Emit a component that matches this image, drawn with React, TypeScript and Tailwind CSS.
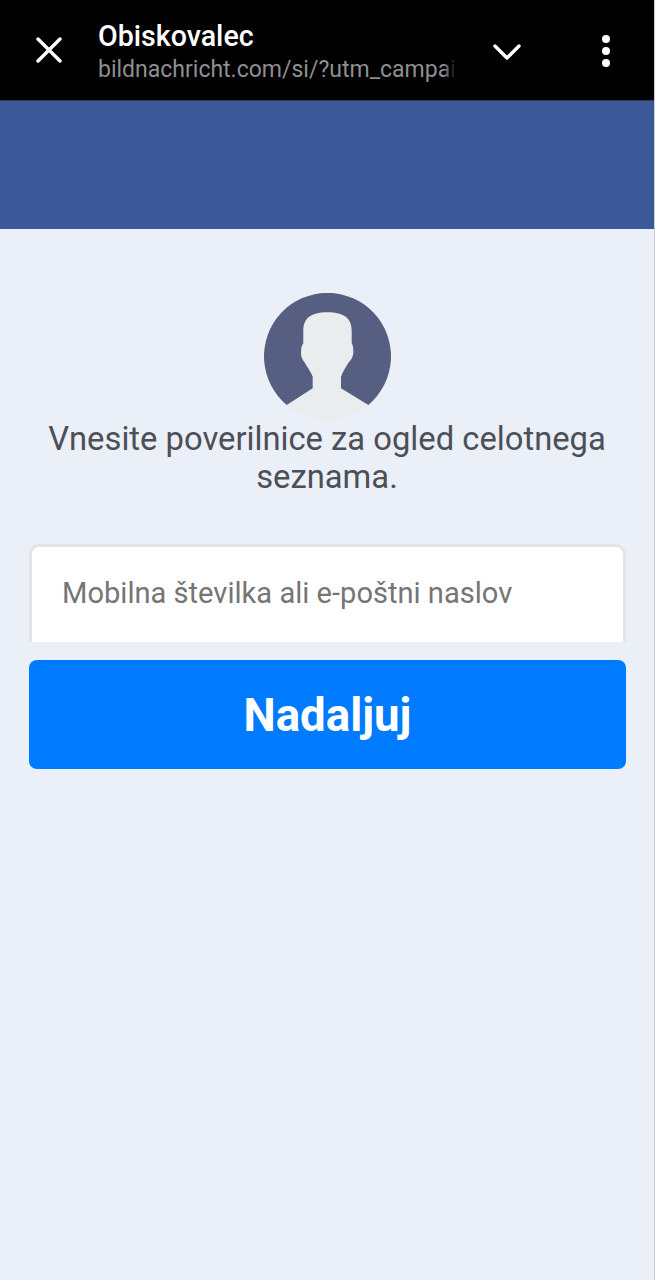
import React from 'react';

const Avatar: React.FC = () => (
  <svg width="127" height="127" viewBox="0 0 127 127" className="block">
    <circle cx="63.5" cy="63.5" r="63.5" fill="#e9edee" />
    <path
      d="M22.7 112 L48.7 95.3 L48.7 83.7 C46 77 43 74 41 70 C38 67 37 63 37 60 C37 55 38 52 39.3 50.3 L39.3 38 C39.3 26 46 19.3 63.3 19.3 C81 19.3 87.7 26 87.7 38 L87.7 50.3 C89 52 89.5 56 89.3 60 C89 64 87 67 84.3 70 C82 74 79 78 77 83.7 L77 95.3 L104.3 112 A63.5 63.5 0 1 0 22.7 112 Z"
      fill="#565f82"
    />
  </svg>
);

const TopBar: React.FC = () => (
  <div className="flex h-[101px] items-start bg-black border-b border-[#2c3a55]">
    <div className="flex h-[100px] w-[98px] shrink-0 items-center pl-[36px]">
      <svg width="26" height="26" viewBox="0 0 26 26" fill="none" stroke="#ffffff" strokeWidth="3.4" strokeLinecap="round">
        <path d="M2 2 L24 24 M24 2 L2 24" />
      </svg>
    </div>
    <div className="relative w-[358px] shrink-0 pt-[19px]">
      <div className="text-[28.6px] leading-[34px] font-medium text-white whitespace-nowrap">Obiskovalec</div>
      <div className="mt-[1px] text-[23px] leading-[32px] text-[#8f8f8f] whitespace-nowrap">bildnachricht.com/si/?utm_campai</div>
      <div className="absolute right-0 bottom-0 h-[34px] w-[12px] bg-gradient-to-r from-transparent to-black" />
    </div>
    <div className="flex h-[100px] flex-1 items-center">
      <svg width="30" height="18" viewBox="0 0 30 18" fill="none" stroke="#ffffff" strokeWidth="3.4" strokeLinecap="round" strokeLinejoin="round" className="ml-[36px] mt-[4px]">
        <path d="M3 3 L15 15 L27 3" />
      </svg>
      <div className="ml-[80px] flex flex-col gap-[4px] mt-[2px]">
        <span className="h-[8px] w-[8px] rounded-full bg-white" />
        <span className="h-[8px] w-[8px] rounded-full bg-white" />
        <span className="h-[8px] w-[8px] rounded-full bg-white" />
      </div>
    </div>
  </div>
);

export default function App() {
  return (
    <div className="flex h-[1280px] w-[655px] flex-col overflow-hidden bg-[#ebeff7] font-['Roboto',sans-serif] border-r border-[#c9cdd6]">
      <TopBar />
      <div className="h-[128px] bg-[#3b5998]" />
      <div className="flex flex-col items-center pt-[64px]">
        <Avatar />
        <p className="mt-0 w-[590px] text-center text-[32.75px] leading-[38px] text-[#4b4f56]">
          Vnesite poverilnice za ogled celotnega seznama.
        </p>
      </div>
      <div className="mt-[48px] flex flex-col pl-[29px] pr-[28px]">
        <div className="flex h-[98px] items-center rounded-t-[10px] border-x-[3px] border-t-[3px] border-[#e3e4e6] bg-white pb-[2px] pl-[30px] text-[29.1px] text-[#757575]">
          Mobilna številka ali e-poštni naslov
        </div>
        <button className="mt-[18px] h-[109px] rounded-[8px] bg-[#007bff] pt-[3px] text-[45.6px] font-bold text-white">
          Nadaljuj
        </button>
      </div>
    </div>
  );
}
